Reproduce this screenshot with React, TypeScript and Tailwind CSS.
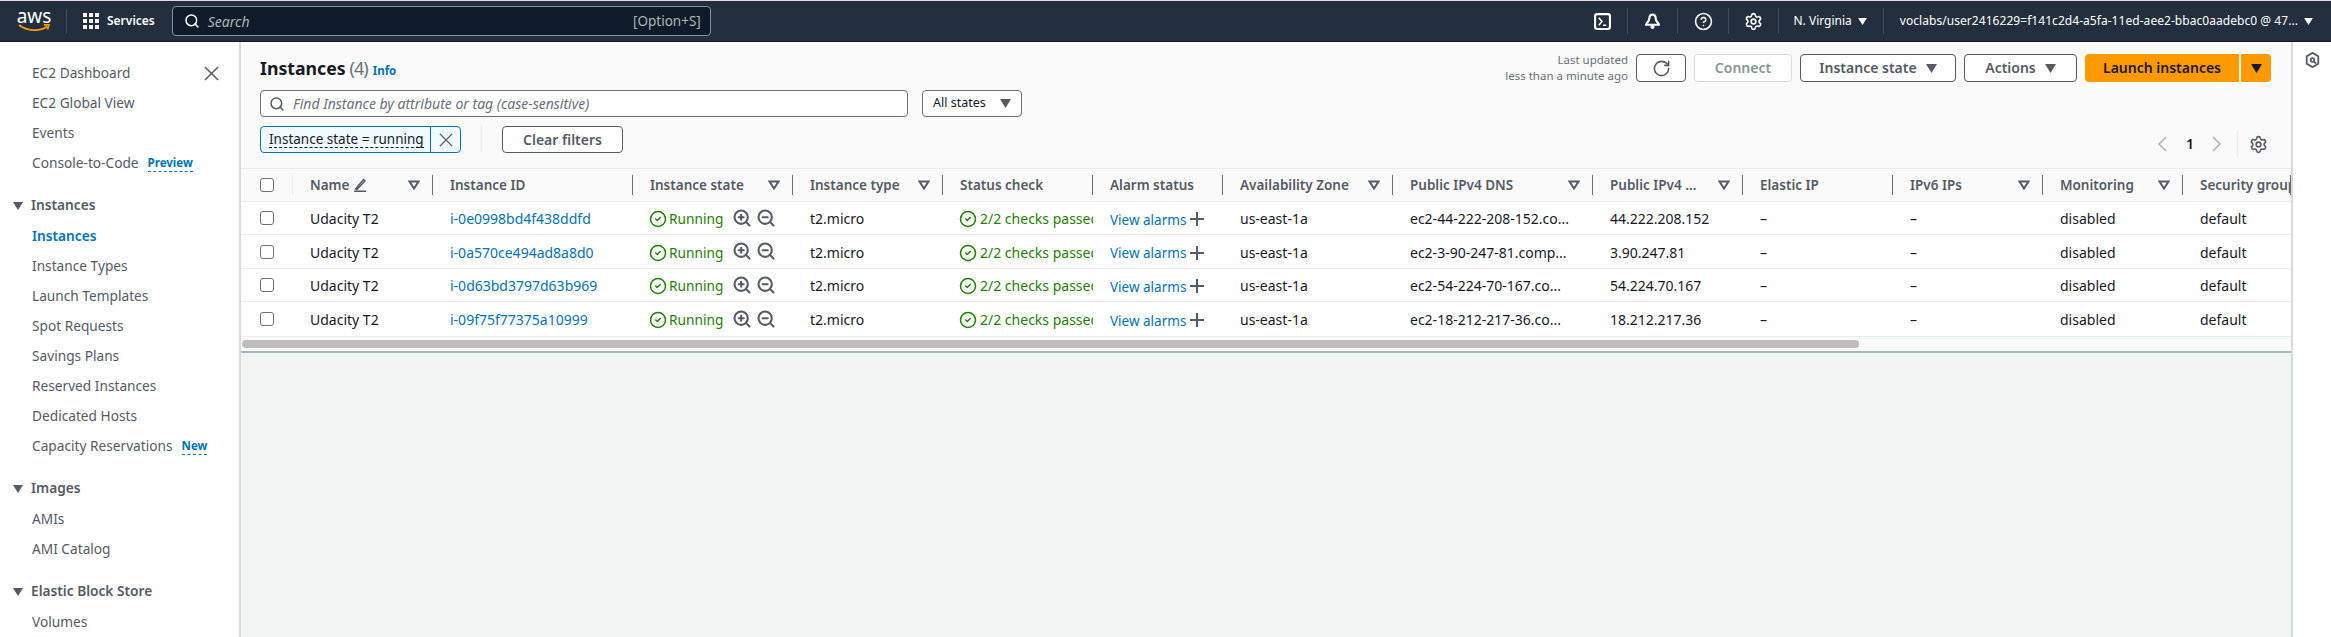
import { Search, RotateCw, ZoomIn, ZoomOut, CircleCheck, Settings, CircleHelp } from 'lucide-react';

const font = { fontFamily: '"Noto Sans", sans-serif' };

function Caret({ className = '' }: { className?: string }) {
  return (
    <svg viewBox="0 0 10 8" className={`h-2 w-2.5 fill-current ${className}`}>
      <path d="M0 0h10L5 8z" />
    </svg>
  );
}

function FilterCaret() {
  return (
    <svg viewBox="0 0 12 10" className="h-2.5 w-3 shrink-0 fill-none stroke-[#545b64] stroke-2">
      <path d="M1.5 1.5h9L6 8.5z" />
    </svg>
  );
}

function CloseIcon({ className = '' }: { className?: string }) {
  return (
    <svg viewBox="0 0 16 16" className={`fill-none stroke-current stroke-[1.6] ${className}`}>
      <path d="M1 1l14 14M15 1L1 15" />
    </svg>
  );
}

function Divider() {
  return <div className="h-[26px] w-px bg-[#414d5c]" />;
}

function NavItem({ label, badge }: { label: string; badge?: string }) {
  return (
    <div className="flex h-[30px] items-center pl-8 text-[13.7px] text-[#545b64]">
      {label}
      {badge && <span className="ml-[9px] border-b border-dashed border-[#0073bb] text-[11.5px] font-bold text-[#0073bb]">{badge}</span>}
    </div>
  );
}

function NavHeader({ label }: { label: string }) {
  return (
    <div className="mt-3 flex h-[31px] items-center pl-[13px] text-[13.7px] font-semibold text-[#545b64]">
      <Caret className="mr-2" />
      {label}
    </div>
  );
}

const gridCols = 'grid grid-cols-[52px_140px_200px_160px_150px_150px_130px_170px_200px_150px_150px_150px_140px_108px]';

const headers: { label: string; filter?: boolean }[] = [
  { label: 'Instance ID' },
  { label: 'Instance state', filter: true },
  { label: 'Instance type', filter: true },
  { label: 'Status check' },
  { label: 'Alarm status' },
  { label: 'Availability Zone', filter: true },
  { label: 'Public IPv4 DNS', filter: true },
  { label: 'Public IPv4 ...', filter: true },
  { label: 'Elastic IP' },
  { label: 'IPv6 IPs', filter: true },
  { label: 'Monitoring', filter: true },
  { label: 'Security group' },
];

const rows = [
  { id: 'i-0e0998bd4f438ddfd', dns: 'ec2-44-222-208-152.co...', ip: '44.222.208.152', h: 'h-[33px]' },
  { id: 'i-0a570ce494ad8a8d0', dns: 'ec2-3-90-247-81.comp...', ip: '3.90.247.81', h: 'h-[34px]' },
  { id: 'i-0d63bd3797d63b969', dns: 'ec2-54-224-70-167.co...', ip: '54.224.70.167', h: 'h-[33px]' },
  { id: 'i-09f75f77375a10999', dns: 'ec2-18-212-217-36.co...', ip: '18.212.217.36', h: 'h-[35px]' },
];

function Checkbox() {
  return <div className="ml-[19px] size-[14px] rounded-[3px] border border-[#687078] bg-white" />;
}

function Cell({ children }: { children: React.ReactNode }) {
  return <div className="flex min-w-0 items-center overflow-hidden whitespace-nowrap pl-[17px] pt-[2px] text-sm text-[#16191f]">{children}</div>;
}

function Button({ label, caret }: { label: string; caret?: boolean }) {
  return (
    <div className="flex h-7 items-center justify-center gap-[9px] rounded-sm border border-[#545b64] bg-white text-sm font-semibold text-[#545b64]">
      {label}
      {caret && <Caret className="h-[9px] w-[11px]" />}
    </div>
  );
}

export default function App() {
  return (
    <div style={font} className="flex h-[637px] w-[2331px] flex-col overflow-hidden bg-white">
      <header className="flex h-[42px] shrink-0 items-center border-b border-t border-b-[#16191f] border-t-[#e9d8e0] bg-[#232f3e] text-white">
        <div className="ml-[18px] flex w-8 flex-col items-center leading-none">
          <span className="mt-[-3px] text-[19px] font-normal leading-[16px]">aws</span>
          <svg viewBox="0 0 32 8" className="h-2 w-8">
            <path d="M1 1c8 6 21 7 28 1.500M26 1l5-.5-1.500 5" fill="none" stroke="#ff9900" strokeWidth="1.800" />
          </svg>
        </div>
        <div className="ml-4 h-[24px] w-px bg-[#414d5c]" />
        <svg viewBox="0 0 16 16" className="ml-4 size-4 fill-white">
          <path d="M0 0h4v4H0zM6 0h4v4H6zM12 0h4v4h-4zM0 6h4v4H0zM6 6h4v4H6zM12 6h4v4h-4zM0 12h4v4H0zM6 12h4v4H6zM12 12h4v4h-4z" />
        </svg>
        <span className="ml-2 text-xs font-semibold">Services</span>
        <div className="ml-[17px] flex h-[30px] w-[539px] items-center rounded-sm border border-[#879596] bg-[#0f1b2a] pl-[11px] pr-[9px] text-[#aab7b8]">
          <Search className="size-[16px] text-white" strokeWidth={2.25} />
          <span className="ml-2 text-[14px] italic">Search</span>
          <span className="ml-auto text-[13.500px]">[Option+S]</span>
        </div>
        <div className="ml-auto flex items-center">
          <svg viewBox="0 0 16 16" className="size-[17px] fill-none stroke-white stroke-2">
            <rect x="1" y="1" width="14" height="14" rx="2" />
            <path d="M4.500 4.500L7.500 8l-3 3.500M8.500 11.500h3" strokeWidth="1.500" />
          </svg>
          <div className="mx-4"><Divider /></div>
          <svg viewBox="0 0 16 16" className="size-[17px] fill-none stroke-white stroke-2">
            <path d="M8 1.500c-2.500 0-3 2-3 4 0 2.500-3 4-3 5.500h12c0-1.500-3-3-3-5.500 0-2-.5-4-3-4z" />
            <circle cx="8" cy="13" r="1.500" fill="white" strokeWidth="1" />
          </svg>
          <div className="mx-4"><Divider /></div>
          <CircleHelp className="size-[19px]" strokeWidth={2} />
          <div className="mx-[15px]"><Divider /></div>
          <Settings className="size-[19px]" strokeWidth={2} />
          <div className="mx-[15px]"><Divider /></div>
          <span className="text-xs">N. Virginia</span>
          <Caret className="ml-[6px] h-[7px] w-[9px]" />
          <div className="mx-4"><Divider /></div>
          <span className="text-xs tracking-[0.05px]">voclabs/user2416229=f141c2d4-a5fa-11ed-aee2-bbac0aadebc0 @ 47...</span>
          <Caret className="ml-[6px] mr-[18px] h-[7px] w-[9px]" />
        </div>
      </header>

      <div className="flex min-h-0 flex-1">
        <aside className="relative w-[241px] shrink-0 border-r-2 border-[#d5dbdb] bg-white pt-4">
          <CloseIcon className="absolute left-[204px] top-[24px] size-[15px] text-[#545b64]" />
          <NavItem label="EC2 Dashboard" />
          <NavItem label="EC2 Global View" />
          <NavItem label="Events" />
          <NavItem label="Console-to-Code" badge="Preview" />
          <NavHeader label="Instances" />
          <div className="flex h-[30px] items-center pl-8 text-[13.7px] font-semibold text-[#0073bb]">Instances</div>
          <NavItem label="Instance Types" />
          <NavItem label="Launch Templates" />
          <NavItem label="Spot Requests" />
          <NavItem label="Savings Plans" />
          <NavItem label="Reserved Instances" />
          <NavItem label="Dedicated Hosts" />
          <NavItem label="Capacity Reservations" badge="New" />
          <NavHeader label="Images" />
          <NavItem label="AMIs" />
          <NavItem label="AMI Catalog" />
          <NavHeader label="Elastic Block Store" />
          <NavItem label="Volumes" />
        </aside>

        <main className="flex min-w-0 flex-1 flex-col bg-[#f2f3f3]">
          <div className="h-[126px] bg-[#fafafa] pl-[19px] pt-[10px]">
            <div className="flex h-7 items-start">
              <div className="mt-[2px] flex items-baseline">
                <span className="text-[17.700px] font-bold text-[#16191f]">Instances</span>
                <span className="ml-1 text-lg tracking-[-1px] text-[#687078]">(4)</span>
                <span className="ml-[5px] text-[11.500px] font-bold text-[#0073bb]">Info</span>
              </div>
              <div className="ml-auto flex items-center pr-5">
                <div className="mr-2 text-right text-[11.500px] leading-4 text-[#687078]">
                  Last updated
                  <br />
                  less than a minute ago
                </div>
                <div className="flex h-7 w-[50px] items-center justify-center rounded-sm border border-[#545b64] bg-white text-[#545b64]">
                  <RotateCw className="size-[19px]" strokeWidth={2} />
                </div>
                <div className="ml-2 flex h-7 w-[98px] items-center justify-center rounded-sm border border-[#d5dbdb] bg-white text-sm font-semibold text-[#879596]">Connect</div>
                <div className="ml-2 w-[156px]"><Button label="Instance state" caret /></div>
                <div className="ml-2 w-[113px]"><Button label="Actions" caret /></div>
                <div className="ml-2 flex h-7 w-[154px] items-center justify-center rounded-l-sm bg-[#ff9900] text-sm font-semibold text-[#16191f]">Launch instances</div>
                <div className="ml-[2px] flex h-7 w-[30px] items-center justify-center rounded-r-sm bg-[#ff9900] text-[#16191f]"><Caret className="h-[9px] w-[11px]" /></div>
              </div>
            </div>
            <div className="mt-[10px] flex">
              <div className="flex h-[27px] w-[648px] items-center rounded-sm border border-[#687078] bg-white pl-2 text-[14px] italic text-[#687078]">
                <Search className="mr-2 size-[16px] text-[#545b64]" strokeWidth={2.25} />
                Find Instance by attribute or tag (case-sensitive)
              </div>
              <div className="ml-[14px] flex h-[27px] w-[100px] items-center justify-center gap-[14px] rounded-sm border border-[#687078] bg-white text-[12.500px] text-[#16191f]">
                All states
                <Caret className="h-[9px] w-[11px] text-[#545b64]" />
              </div>
            </div>
            <div className="mt-[9px] flex items-start">
              <div className="flex h-[27px] w-[201px] items-center rounded-sm border border-[#0073bb] bg-[#f1faff] text-[13.500px] text-[#16191f]">
                <span className="ml-2 whitespace-nowrap border-b border-dashed border-[#16191f] leading-[16px]">Instance state = running</span>
                <div className="ml-auto flex h-full w-[30px] shrink-0 items-center justify-center border-l border-[#0073bb] text-[#545b64]">
                  <CloseIcon className="size-[14px]" />
                </div>
              </div>
              <div className="ml-5 h-[26px] w-px bg-[#eaeded]" />
              <div className="ml-5 flex h-[27px] w-[121px] items-center justify-center rounded-sm border border-[#545b64] bg-white text-sm font-semibold text-[#545b64]">Clear filters</div>
              <div className="ml-auto mt-1 flex h-7 items-center pr-[23px] text-[#aab7b8]">
                <svg viewBox="0 0 10 16" className="h-4 w-2.5 fill-none stroke-current stroke-[1.6]"><path d="M9 1L2 8l7 7" /></svg>
                <span className="ml-[19px] w-2 text-sm font-semibold text-[#16191f]">1</span>
                <svg viewBox="0 0 10 16" className="ml-[18px] h-4 w-2.5 fill-none stroke-current stroke-[1.6]"><path d="M1 1l7 7-7 7" /></svg>
                <div className="ml-[15px] mr-[11px] h-7 w-px bg-[#eaeded]" />
                <Settings className="size-[19px] text-[#545b64]" strokeWidth={2} />
              </div>
            </div>
          </div>

          <div className="flex min-h-0 flex-1">
            <div className="min-w-0 flex-1 overflow-hidden">
              <div className={`${gridCols} h-[33px] border-t border-[#eaeded] bg-[#fafafa] text-[13.500px] font-semibold text-[#545b64]`}>
                <div className="my-[6px] flex items-center border-r border-[#eaeded]"><Checkbox /></div>
                <div className="my-[6px] flex items-center justify-between border-r border-[#687078] pl-[17px] pr-3">
                  <span className="flex items-center gap-1">
                    Name
                    <svg viewBox="0 0 14 14" className="size-[14px] fill-none stroke-[#545b64] stroke-[1.5]">
                      <path d="M1 13.250h12M2.500 11L10.500 1.500l1.500 1.300L4 11.500z" />
                    </svg>
                  </span>
                  <FilterCaret />
                </div>
                {headers.map((h) => (
                  <div key={h.label} className="my-[6px] flex min-w-0 items-center justify-between overflow-hidden whitespace-nowrap border-r border-[#687078] pl-[17px] pr-3">
                    {h.label}
                    {h.filter && <FilterCaret />}
                  </div>
                ))}
              </div>
              <div className="bg-white">
                {rows.map((r) => (
                  <div key={r.id} className={`${gridCols} ${r.h} border-t border-[#eaeded]`}>
                    <div className="flex items-center"><Checkbox /></div>
                    <Cell>Udacity T2</Cell>
                    <Cell><span className="text-[#0073bb]">{r.id}</span></Cell>
                    <Cell>
                      <span className="-ml-px flex w-[83px] shrink-0 items-center gap-[2px] text-[13.700px] text-[#1d8102]"><CircleCheck className="size-[18px]" strokeWidth={2} />Running</span>
                      <ZoomIn className="mb-[3px] size-[20px] shrink-0 text-[#545b64]" strokeWidth={2.5} />
                      <ZoomOut className="mb-[3px] ml-1 size-[20px] shrink-0 text-[#545b64]" strokeWidth={2.5} />
                    </Cell>
                    <Cell>t2.micro</Cell>
                    <Cell>
                      <span className="-ml-px flex items-center gap-[3px] text-[#1d8102]"><CircleCheck className="size-[18px] shrink-0" strokeWidth={2} />2/2 checks passed</span>
                    </Cell>
                    <Cell>
                      <span className="mt-px text-[13.500px] leading-5 text-[#0073bb]">View alarms</span>
                      <svg viewBox="0 0 14 14" className="ml-1 size-[14px] shrink-0 fill-none stroke-[#545b64] stroke-2"><path d="M7 0v14M0 7h14" /></svg>
                    </Cell>
                    <Cell>us-east-1a</Cell>
                    <Cell>{r.dns}</Cell>
                    <Cell>{r.ip}</Cell>
                    <Cell>–</Cell>
                    <Cell>–</Cell>
                    <Cell>disabled</Cell>
                    <Cell>default</Cell>
                  </div>
                ))}
              </div>
              <div className="h-[17px] border-t border-[#eaeded] border-b-2 border-b-[#aab7b8] bg-[#fafafa] pl-px pt-[3px]">
                <div className="h-2 w-[1617px] rounded bg-[#bdbdbd]" />
              </div>
            </div>
          </div>
        </main>

        <aside className="flex w-10 shrink-0 justify-center border-l-2 border-[#d5dbdb] bg-white pt-[10px]">
          <svg viewBox="0 0 16 18" className="h-[16px] w-[15px] fill-none stroke-[#545b64] stroke-2">
            <path d="M8 1l6.500 3.700v8.600L8 17l-6.500-3.700V4.700z" />
            <circle cx="8" cy="9" r="2" />
            <path d="M9.500 10.500L12 13" />
          </svg>
        </aside>
      </div>
    </div>
  );
}
